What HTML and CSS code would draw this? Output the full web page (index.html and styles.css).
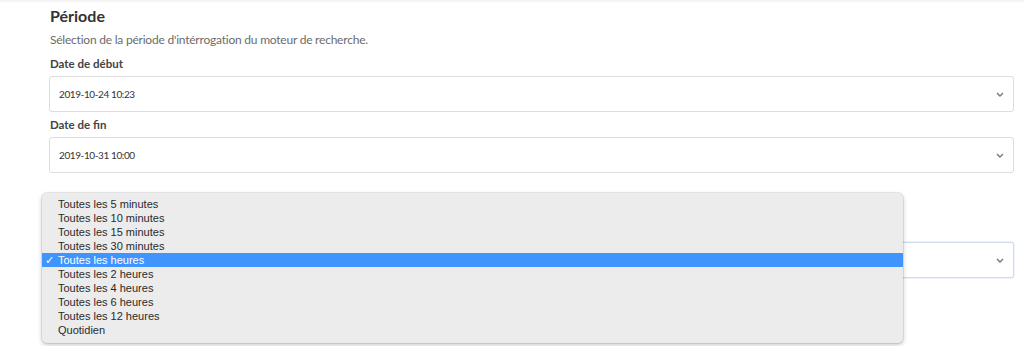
FILE: index.html
```html
<!DOCTYPE html>
<html lang="fr">
<head>
<meta charset="utf-8">
<link rel="stylesheet" href="styles.css">
</head>
<body>
<div class="page">
  <section class="card">
    <h2 class="title">Période</h2>
    <p class="desc">Sélection de la période d'intérrogation du moteur de recherche.</p>
    <div class="field">
      <label class="label">Date de début</label>
      <div class="select"><span>2019-10-24 10:23</span><svg class="chev" viewBox="0 0 8 5" width="8" height="5"><path d="M1 1l3 3 3-3" fill="none" stroke="#777" stroke-width="1.4"/></svg></div>
    </div>
    <div class="field">
      <label class="label">Date de fin</label>
      <div class="select"><span>2019-10-31 10:00</span><svg class="chev" viewBox="0 0 8 5" width="8" height="5"><path d="M1 1l3 3 3-3" fill="none" stroke="#777" stroke-width="1.4"/></svg></div>
    </div>
    <div class="field field-freq">
      <div class="select focus"><span></span><svg class="chev" viewBox="0 0 8 5" width="8" height="5"><path d="M1 1l3 3 3-3" fill="none" stroke="#777" stroke-width="1.4"/></svg></div>
    </div>
  </section>
  <ul class="menu">
    <li>Toutes les 5 minutes</li>
    <li>Toutes les 10 minutes</li>
    <li>Toutes les 15 minutes</li>
    <li>Toutes les 30 minutes</li>
    <li class="sel"><span class="check">✓</span>Toutes les heures</li>
    <li>Toutes les 2 heures</li>
    <li>Toutes les 4 heures</li>
    <li>Toutes les 6 heures</li>
    <li>Toutes les 12 heures</li>
    <li>Quotidien</li>
  </ul>
</div>
</body>
</html>
```

FILE: styles.css
```css
* { box-sizing: border-box; }
html, body { margin: 0; padding: 0; background: #fff; }
body { font-family: "Lato", "Open Sans", sans-serif; color: #333; }
.page { position: relative; width: 1024px; height: 346px; overflow: hidden; background: #fff; }
.page::before { content: ""; display: block; height: 3px; background: linear-gradient(#f1f1f1, #fff); }
.card { padding: 3px 10px 0 49px; display: flex; flex-direction: column; }
.title { margin: 0 0 0 1px; font-size: 16px; line-height: 20px; font-weight: 700; color: #333; }
.desc { margin: 5px 0 2px 1px; font-size: 12px; line-height: 18px; letter-spacing: -0.22px; color: #6b6b6b; }
.field { display: flex; flex-direction: column; }
.label { margin: 5px 0 4px 1px; font-size: 11.5px; line-height: 16px; font-weight: 700; color: #444; }
.field-freq { margin-top: 69px; }
.select { height: 36px; border: 1px solid #ddd; border-radius: 3px; background: #fff; display: flex; align-items: center; justify-content: space-between; padding: 0 9px 0 9px; font-size: 10px; letter-spacing: -0.4px; color: #333; }
.select.focus { border-color: #cfdcee; box-shadow: 0 0 0 1px #eef3fb; }
.chev { flex: none; margin-top: 1px; }
.menu { position: absolute; left: 42px; top: 193px; width: 861px; height: 150px; margin: 0; padding: 4px 0; list-style: none; background: #ececec; border-radius: 5px; box-shadow: 0 0 0 1px rgba(0,0,0,0.08), 0 2px 5px rgba(0,0,0,0.22); font-family: "Liberation Sans", Arial, sans-serif; font-size: 11px; color: #2a2a2a; }
.menu li { position: relative; height: 14px; line-height: 14px; padding-left: 16px; }
.menu li.sel { background: #3f95fd; color: #fff; }
.check { position: absolute; left: 3px; top: 0; font-size: 11px; }
```
